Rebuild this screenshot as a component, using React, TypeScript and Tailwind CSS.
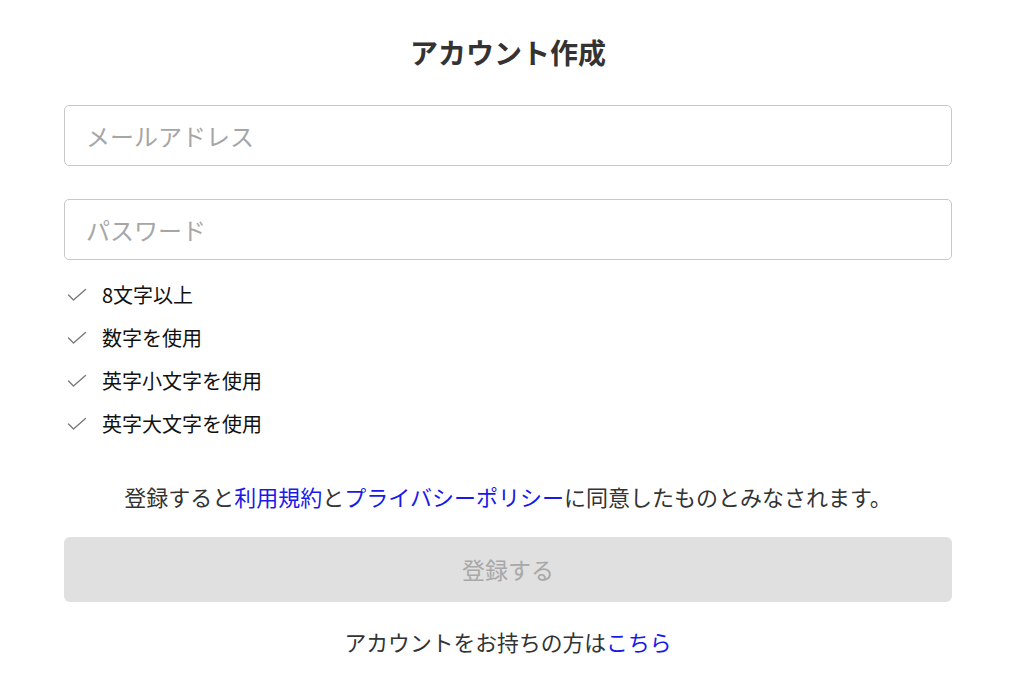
const rules = ["8文字以上", "数字を使用", "英字小文字を使用", "英字大文字を使用"];

function Check() {
  return (
    <svg width="20" height="14" viewBox="0 0 20 14" fill="none" className="shrink-0">
      <polyline points="1.5,7 6.5,12 18.5,1.5" stroke="#7a7a7a" strokeWidth="1.4" strokeLinecap="round" strokeLinejoin="round" />
    </svg>
  );
}

export default function App() {
  return (
    <main
      className="min-h-[697px] bg-white pl-16 pr-[72px] text-[#333]"
      style={{ fontFamily: '"Noto Sans CJK JP", "Noto Sans", sans-serif' }}
    >
      <div className="flex flex-col pt-[32px]">
        <h1 className="h-[40px] text-center text-[28px] font-bold leading-[40px] text-[#333]">アカウント作成</h1>

        <input
          type="email"
          placeholder="メールアドレス"
          className="mt-[33px] h-[61px] w-full rounded-[5px] border border-[#c8c8c8] px-[21px] text-[24px] outline-none placeholder:text-[#a6a6a6]"
        />
        <input
          type="password"
          placeholder="パスワード"
          className="mt-[33px] h-[61px] w-full rounded-[5px] border border-[#c8c8c8] px-[21px] text-[24px] outline-none placeholder:text-[#a6a6a6]"
        />

        <ul className="mt-[13px] flex flex-col">
          {rules.map((r) => (
            <li key={r} className="flex h-[43px] items-center gap-[15px] pl-[3px] text-[20px] text-[#111]">
              <Check />
              <span>{r}</span>
            </li>
          ))}
        </ul>

        <p className="mt-[35px] h-[32px] text-center text-[22px] leading-[32px] text-[#333]">
          登録すると<a href="#" className="text-[#1a1ae8]">利用規約</a>と
          <a href="#" className="text-[#1a1ae8]">プライバシーポリシー</a>に同意したものとみなされます。
        </p>

        <button
          disabled
          className="mt-[25px] h-[65px] w-full rounded-[6px] bg-[#e0e0e0] text-[23px] text-[#a8a8a8]"
        >
          登録する
        </button>

        <p className="mt-[24px] h-[32px] text-center text-[21.8px] leading-[32px] text-[#333]">
          アカウントをお持ちの方は<a href="#" className="text-[#1a1ae8]">こちら</a>
        </p>
      </div>
    </main>
  );
}
